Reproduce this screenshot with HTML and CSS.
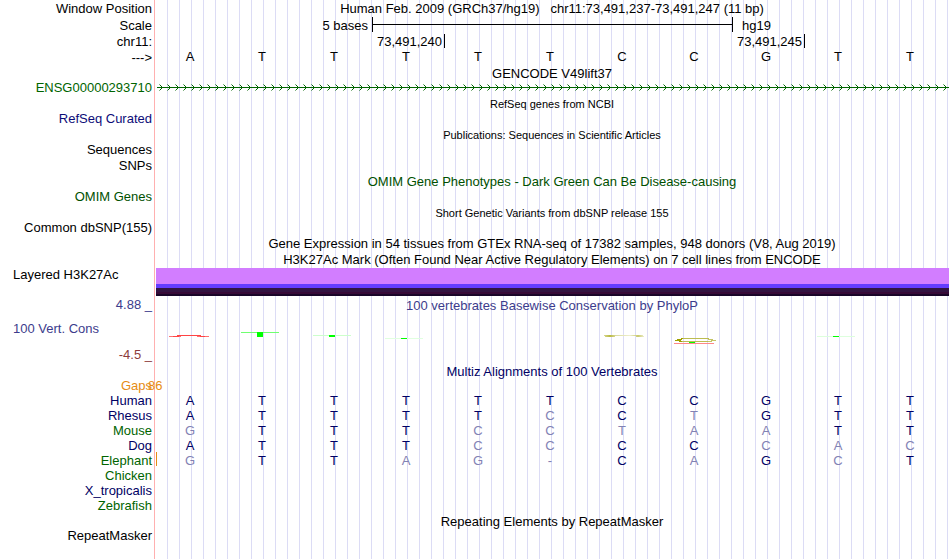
FILE: index.html
```
<!DOCTYPE html>
<html lang="en">
<head>
<meta charset="utf-8">
<title>Genome Browser hg19 chr11</title>
<link rel="stylesheet" href="styles.css">
</head>
<body>
<main class="browser">
  <div class="row tall"><span class="label">Window Position</span><div class="title">Human Feb. 2009 (GRCh37/hg19) &nbsp; chr11:73,491,237-73,491,247 (11 bp)</div></div>
  <div class="row tall"><span class="label">Scale</span><div class="cols ruler"><span class="span3">5 bases</span><span class="bar"></span><span class="assembly">hg19</span></div></div>
  <div class="row mid"><span class="label">chr11:</span><div class="cols"><span class="tick span4">73,491,240</span><span class="tick span5">73,491,245</span></div></div>
  <div class="row mid"><span class="label">---&gt;</span><div class="cols bases"><span>A</span><span>T</span><span>T</span><span>T</span><span>T</span><span>T</span><span>C</span><span>C</span><span>G</span><span>T</span><span>T</span></div></div>
  <div class="row"><span></span><div class="title">GENCODE V49lift37</div></div>
  <div class="row"><span class="label gene">ENSG00000293710</span>
    <svg class="transcript" aria-hidden="true"><defs><pattern id="arrows" y="2" width="8" height="9" patternUnits="userSpaceOnUse"><path d="M3.5 1.5 6.5 4.5 3.5 7.5" fill="none" stroke="#006400"/></pattern></defs><rect y="2" width="100%" height="9" fill="url(#arrows)"/><rect x="1" y="6" width="100%" height="1" fill="#006400"/></svg>
  </div>
  <div class="row mid"><span></span><div class="title small">RefSeq genes from NCBI</div></div>
  <div class="row"><span class="label refseq">RefSeq Curated</span></div>
  <div class="row mid"><span></span><div class="title small">Publications: Sequences in Scientific Articles</div></div>
  <div class="row"><span class="label">Sequences</span></div>
  <div class="row mid"><span class="label">SNPs</span></div>
  <div class="row mid"><span></span><div class="title omim">OMIM Gene Phenotypes - Dark Green Can Be Disease-causing</div></div>
  <div class="row"><span class="label omim">OMIM Genes</span></div>
  <div class="row mid"><span></span><div class="title small">Short Genetic Variants from dbSNP release 155</div></div>
  <div class="row"><span class="label">Common dbSNP(155)</span></div>
  <div class="row mid"><span></span><div class="title">Gene Expression in 54 tissues from GTEx RNA-seq of 17382 samples, 948 donors (V8, Aug 2019)</div></div>
  <div class="row mid"><span></span><div class="title">H3K27Ac Mark (Often Found Near Active Regulatory Elements) on 7 cell lines from ENCODE</div></div>
  <div class="row histone"><span class="label left">Layered H3K27Ac</span><div class="signal"></div></div>
  <div class="row conservation">
    <div class="axis"><span class="label upper">4.88 _</span><span class="label left">100 Vert. Cons</span><span class="label lower">-4.5 _</span></div>
    <div>
      <div class="title phylop">100 vertebrates Basewise Conservation by PhyloP</div>
      <svg class="logo" viewBox="0 0 792 50" preserveAspectRatio="none" aria-hidden="true">
        <defs>
          <linearGradient id="paleC"><stop offset="0" stop-color="#d8d890"/><stop offset=".15" stop-color="#b8b840"/><stop offset=".3" stop-color="#dcdca0"/><stop offset=".65" stop-color="#eeeecc"/><stop offset=".85" stop-color="#c8c86c"/><stop offset="1" stop-color="#eeeecc"/></linearGradient>
        </defs>
        <path d="M13 22.5H25M41 22.5H53" stroke="#ff7070"/>
        <path d="M17 22.5H23M44 22.5H49M21 21.5H45" stroke="#ff4444"/>
        <path d="M85 18.5H123" stroke="#70ff70"/><path d="M101 18h6v5h-6z" fill="#0f0"/>
        <path d="M157 21.5H195" stroke="#ccffcc"/><path d="M173 21h6v2h-6z" fill="#0f0"/>
        <path d="M229 24.5H267" stroke="#e0ffe0"/><path d="M245 24h6v1h-6z" fill="#0f0"/>
        <path d="M448 21h37l3 1v1h-6l-5-1h-17l-2 1h-9z" fill="url(#paleC)"/>
        <path d="M525 24.5H553M525 27.5H553" stroke="#bcbc50"/>
        <path d="M519 26 523 25 527 24v1L525 26v1L527 28 519 27z" fill="#a0a000"/>
        <path d="M552 25.5H557M555 26.5H560M552 27.5H556" stroke="#c4c464"/>
        <path d="M533 28h6v1h-6z" fill="#0f0"/><path d="M518 29.5H558" stroke="#ff8888"/>
        <path d="M661 22.5H699" stroke="#ddffdd"/><path d="M677 22h6v1h-6z" fill="#0f0"/>
      </svg>
    </div>
  </div>
  <div class="row"><span></span><div class="title multiz">Multiz Alignments of 100 Vertebrates</div></div>
  <div class="row"><span class="label gaps">Gaps</span><span class="label gap-size">86</span></div>
  <table class="alignment">
    <tr><th>Human</th><td>A</td><td>T</td><td>T</td><td>T</td><td>T</td><td>T</td><td>C</td><td>C</td><td>G</td><td>T</td><td>T</td></tr>
    <tr><th>Rhesus</th><td>A</td><td>T</td><td>T</td><td>T</td><td>T</td><td class="diff">C</td><td>C</td><td class="diff">T</td><td>G</td><td>T</td><td>T</td></tr>
    <tr class="alt"><th>Mouse</th><td class="diff">G</td><td>T</td><td>T</td><td>T</td><td class="diff">C</td><td class="diff">C</td><td class="diff">T</td><td class="diff">A</td><td class="diff">A</td><td>T</td><td>T</td></tr>
    <tr><th>Dog</th><td>A</td><td>T</td><td>T</td><td>T</td><td class="diff">C</td><td class="diff">C</td><td>C</td><td>C</td><td class="diff">C</td><td class="diff">A</td><td class="diff">C</td></tr>
    <tr class="alt"><th class="insert">Elephant</th><td class="diff">G</td><td>T</td><td>T</td><td class="diff">A</td><td class="diff">G</td><td class="diff">-</td><td>C</td><td class="diff">A</td><td>G</td><td class="diff">C</td><td>T</td></tr>
    <tr class="alt"><th>Chicken</th><td colspan="11"></td></tr>
    <tr><th>X_tropicalis</th><td colspan="11"></td></tr>
    <tr class="alt"><th>Zebrafish</th><td colspan="11"></td></tr>
  </table>
  <div class="row"><span></span><div class="title">Repeating Elements by RepeatMasker</div></div>
  <div class="row"><span class="label">RepeatMasker</span></div>
</main>
</body>
</html>
```
FILE: styles.css
```
* { box-sizing: border-box; }
body {
  margin: 0;
  background: #fff;
  color: #000;
  font: 13px/15px "Liberation Sans", Arial, sans-serif;
}
.browser {
  min-height: 100vh;
  margin-right: 1px;
  background:
    linear-gradient(#ffb0b0, #ffb0b0) 154px 0 / 1px 100% no-repeat,
    repeating-linear-gradient(to right, transparent 0 11px, #dcdcf5 11px 12px) 156px 0 / 100% 100% no-repeat;
}
.row {
  display: grid;
  grid-template-columns: 156px minmax(0, 1fr);
  height: 15px;
  white-space: nowrap;
}
.row > .label { line-height: 13px; }
.mid, .mid > .label { height: 16px; line-height: 16px; }
.tall, .tall > .label { height: 17px; line-height: 17px; }
.label { padding-right: 4px; text-align: right; }
.label.left { padding-left: 13px; text-align: left; }
.title { padding-right: 1px; text-align: center; }
.small { font-size: 11px; }
.gene { color: #006400; }
.refseq { color: #0c0c78; }
.omim { color: #005000; }
.phylop, .upper, .conservation .left { color: #3c3c8c; }
.multiz { color: #000064; }
.lower { color: #8c3c3c; }
.gaps, .gap-size { color: #e68c14; }

.cols {
  display: grid;
  grid-template-columns: repeat(11, 1fr);
  padding-right: 1px;
}
.span3 { grid-column: span 3; padding-right: 4px; text-align: right; }
.bar {
  grid-column: span 5;
  height: 15px;
  margin-right: -1px;
  border: solid #000;
  border-width: 0 1px;
  background: linear-gradient(#000, #000) 0 7px / 100% 1px no-repeat;
}
.assembly { grid-column: span 3; padding-left: 10px; }
.tick {
  height: 14px;
  margin-right: -1px;
  padding-right: 2px;
  border-right: 1px solid #000;
  text-align: right;
}
.span4 { grid-column: span 4; }
.span5 { grid-column: span 5; }
.bases {
  margin-left: -2px;
  padding-right: 3px;
  line-height: 14px;
  text-align: center;
}
.transcript { display: block; width: 100%; height: 15px; }

.histone { height: 28px; }
.signal {
  background: linear-gradient(#d27dff 0 16px, #643cff 16px 20px, #321441 20px 24px, #370a37 24px 26px, #190528 26px);
}
.conservation { height: 68px; }
.axis { display: grid; grid-template-rows: 24px 26px 18px; line-height: 18px; }
.phylop { height: 18px; line-height: 19px; }
.logo { display: block; width: 100%; height: 50px; padding-right: 1px; shape-rendering: crispEdges; }
.label.gap-size { margin-left: -8px; text-align: left; }

.alignment {
  width: 100%;
  padding-right: 3px;
  border-spacing: 0;
  table-layout: fixed;
  color: #000064;
  line-height: 13px;
}
.alignment tr { height: 15px; }
.alignment th {
  width: 154px;
  padding: 0 2px 2px 0;
  font-weight: normal;
  text-align: right;
}
.alignment td { padding: 0 0 2px; text-align: center; }
.alt th { color: #006400; }
.alignment .diff { color: #8282b4; }
.alignment .insert { position: relative; }
.insert::after {
  content: "";
  position: absolute;
  top: -2px;
  right: -3px;
  width: 1px;
  height: 14px;
  background: #e68c14;
}
```
